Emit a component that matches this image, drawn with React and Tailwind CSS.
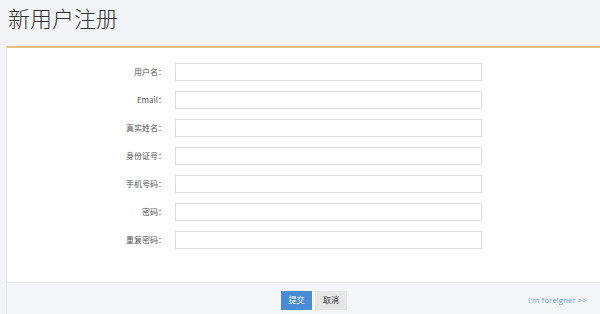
import React from "react";

const fields = [
  { label: "用户名：", type: "text" },
  { label: "Email：", type: "text" },
  { label: "真实姓名：", type: "text" },
  { label: "身份证号：", type: "text" },
  { label: "手机号码：", type: "text" },
  { label: "密码：", type: "password" },
  { label: "重复密码：", type: "password" },
];

export default function App() {
  return (
    <div
      className="w-[600px] h-[314px] bg-[#f3f4f7] overflow-hidden flex flex-col"
      style={{ fontFamily: '"Microsoft YaHei", "Noto Sans CJK SC", sans-serif' }}
    >
      {/* Header */}
      <div className="h-[46px] pl-[8px] pt-[3px]">
        <h1 className="text-[22px] leading-[28px] text-[#333] font-light">新用户注册</h1>
      </div>

      {/* Panel */}
      <div className="ml-[6px] flex-1 flex flex-col bg-white border-t-2 border-[#e8c17e] border-l border-l-[#e6e8ec]">
        <div className="flex-1 pt-[10px]">
          {fields.map((f) => (
            <div key={f.label} className="flex items-center h-[28px]">
              <label className="w-[163px] text-right text-[8px] text-[#555] pr-[4px]">
                {f.label}
              </label>
              <input
                type={f.type}
                className="ml-[5px] w-[307px] h-[18px] border border-[#dcdcdc] bg-white outline-none"
              />
            </div>
          ))}
        </div>

        {/* Footer */}
        <div className="h-[32px] bg-[#f5f6f8] border-t border-[#e6e8ec] flex items-center">
          <div className="flex gap-[3px] ml-[274px] mt-[3px]">
            <button className="w-[31px] h-[19px] bg-[#4a8bd6] text-white text-[8px]">提交</button>
            <button className="w-[32px] h-[19px] bg-[#e6e6e6] text-[#333] text-[8px]">取消</button>
          </div>
          <a
            className="ml-auto mr-[13px] mt-[3px] text-[8px] text-[#6d9ed8]"
            style={{ fontFamily: '"Open Sans", sans-serif' }}
          >
            I'm foreigner &gt;&gt;
          </a>
        </div>
      </div>
    </div>
  );
}
